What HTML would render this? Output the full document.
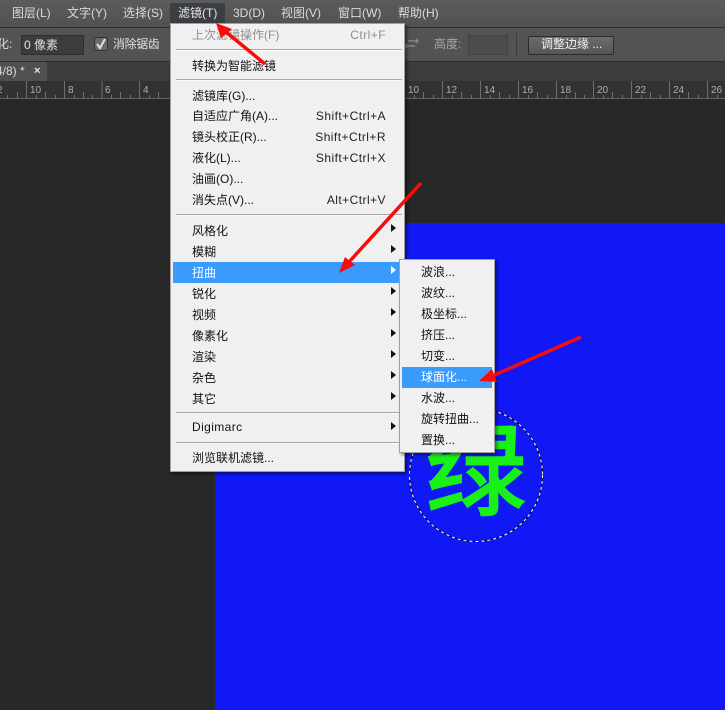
<!DOCTYPE html>
<html><head><meta charset="utf-8"><style>
html,body{margin:0;padding:0}
body{width:725px;height:710px;position:relative;overflow:hidden;background:#282828;font:12px/16px "Liberation Sans","Noto Sans CJK SC",sans-serif;color:#111}
div,span{position:absolute;white-space:nowrap}
.mb{top:5px;color:#dcdcdc;font-size:12px;line-height:16px}
.it{left:21px;height:16px;line-height:16px;color:#111}
.sc{right:18px;height:16px;line-height:16px;color:#222;letter-spacing:.45px}
.ar{left:220px;width:0;height:0;border-left:5px solid #111;border-top:4px solid transparent;border-bottom:4px solid transparent}
.sep{left:5px;width:226px;height:1px;background:#a8a8a8;border-bottom:1px solid #fafafa}
.s{left:21px;height:16px;line-height:16px;color:#111}
</style></head><body>
<div style="left:0;top:0;width:725px;height:27px;background:linear-gradient(#5c5c5c,#515151)"></div>
<div style="left:0;top:27px;width:725px;height:1px;background:#2c2c2c"></div>
<div style="left:0;top:28px;width:725px;height:33px;background:#535353"></div>
<div style="left:0;top:61px;width:725px;height:1px;background:#2e2e2e"></div>
<div style="left:0;top:62px;width:725px;height:19px;background:#3c3c3c"></div>
<div style="left:0;top:62px;width:47px;height:19px;background:#505050"></div>
<div style="left:0;top:81px;width:725px;height:17px;background:#323232"></div>
<div style="left:0;top:98px;width:725px;height:1px;background:#666"></div>
<div style="left:215px;top:223px;width:510px;height:487px;background:#1018f6"></div>

<span class="mb" style="left:12px">图层(L)</span>
<span class="mb" style="left:67px">文字(Y)</span>
<span class="mb" style="left:123px">选择(S)</span>
<div style="left:170px;top:3px;width:55px;height:20px;background:#3b3e42;border-radius:2px 2px 0 0"></div>
<span class="mb" style="left:178px;color:#e6e6e6">滤镜(T)</span>
<span class="mb" style="left:233px">3D(D)</span>
<span class="mb" style="left:281px">视图(V)</span>
<span class="mb" style="left:338px">窗口(W)</span>
<span class="mb" style="left:398px">帮助(H)</span>

<span style="left:-3px;top:36px;color:#dcdcdc">化:</span>
<div style="left:21px;top:35px;width:61px;height:18px;background:#3c3c3c;border:1px solid #2e2e2e"></div>
<span style="left:24px;top:37px;color:#e0e0e0">0 像素</span>
<div style="left:94px;top:37px;width:12px;height:12px;background:#6a6a6a;border:1px solid #333;border-radius:2px"></div>
<svg style="position:absolute;left:94px;top:37px" width="15" height="15"><path d="M3 7l3 4 5-9" fill="none" stroke="#e0e0e0" stroke-width="2"/></svg>
<span style="left:113px;top:36px;color:#e0e0e0;letter-spacing:-.4px">消除锯齿</span>
<svg style="position:absolute;left:404px;top:37px" width="15" height="15"><path d="M1 9h10M3 7l-2 2 2 2M4 4h10M12 2l2 2-2 2" fill="none" stroke="#888" stroke-width="1.5"/></svg>
<span style="left:434px;top:36px;color:#a8a8a8">高度:</span>
<div style="left:468px;top:35px;width:38px;height:18px;background:#4c4c4c;border:1px solid #434343"></div>
<div style="left:516px;top:33px;width:1px;height:23px;background:#3c3c3c"></div>
<div style="left:528px;top:36px;width:84px;height:17px;background:linear-gradient(#6c6c6c,#565656);border:1px solid #2c2c2c;border-radius:2px"></div>
<span style="left:541px;top:36px;color:#f0f0f0">调整边缘 ...</span>

<span style="left:-4px;top:63px;color:#dcdcdc">4/8) *</span>
<span style="left:34px;top:64px;color:#e8e8e8;font-weight:bold;font-size:11px;line-height:14px">×</span>

<svg style="position:absolute;left:0;top:81px" width="725" height="18" font-family="Liberation Sans" font-size="10" fill="#a8b0b8">
<path stroke="#6e6e6e" fill="none" d="M26.5 0v17M64.5 0v17M102 0v17M139.5 0v17M442.5 0v17M480.5 0v17M518.5 0v17M556.5 0v17M593.5 0v17M631.5 0v17M669.5 0v17M707.5 0v17M7.5 14v3M17.5 11v6M36.5 14v3M45.5 11v6M55.5 14v3M74.5 14v3M83.5 11v6M92.5 14v3M111.5 14v3M120.5 11v6M130.5 14v3M149.5 14v3M158.5 11v6M414.5 14v3M423.5 11v6M433.5 14v3M452.5 14v3M461.5 11v6M471.5 14v3M490.5 14v3M499.5 11v6M509.5 14v3M528.5 14v3M537.5 11v6M547.5 14v3M566.5 14v3M575.5 11v6M584.5 14v3M603.5 14v3M612.5 11v6M622.5 14v3M641.5 14v3M650.5 11v6M660.5 14v3M679.5 14v3M688.5 11v6M698.5 14v3M717.5 14v3"/>
<text x="-3" y="12">2</text><text x="30" y="12">10</text><text x="68" y="12">8</text><text x="105" y="12">6</text><text x="143" y="12">4</text>
<text x="408" y="12">10</text><text x="446" y="12">12</text><text x="484" y="12">14</text><text x="522" y="12">16</text><text x="560" y="12">18</text><text x="597" y="12">20</text><text x="635" y="12">22</text><text x="673" y="12">24</text><text x="711" y="12">26</text>
</svg>

<!-- canvas glyph and selection -->
<span style="left:426px;top:406px;font:400 100px/116px 'Noto Sans CJK SC',sans-serif;color:#18f018;-webkit-text-stroke:2.5px #18f018">绿</span>
<svg style="position:absolute;left:400px;top:400px" width="150" height="150"><circle cx="76" cy="75" r="66.5" fill="none" stroke="#000" stroke-width="1"/><circle cx="76" cy="75" r="66.5" fill="none" stroke="#fff" stroke-width="1" stroke-dasharray="3 3"/></svg>

<!-- main menu -->
<div style="left:170px;top:23px;width:233px;height:447px;background:#f0f0f0;border:1px solid #a0a0a0;box-shadow:2px 2px 3px rgba(0,0,0,.5)">
<span class="it" style="top:3px;color:#8f8f8f">上次滤镜操作(F)</span><span class="sc" style="top:3px;color:#8f8f8f">Ctrl+F</span>
<div class="sep" style="top:25px"></div>
<span class="it" style="top:34px">转换为智能滤镜</span>
<div class="sep" style="top:55px"></div>
<span class="it" style="top:64px">滤镜库(G)...</span>
<span class="it" style="top:84px">自适应广角(A)...</span><span class="sc" style="top:84px">Shift+Ctrl+A</span>
<span class="it" style="top:105px">镜头校正(R)...</span><span class="sc" style="top:105px">Shift+Ctrl+R</span>
<span class="it" style="top:126px">液化(L)...</span><span class="sc" style="top:126px">Shift+Ctrl+X</span>
<span class="it" style="top:147px">油画(O)...</span>
<span class="it" style="top:168px">消失点(V)...</span><span class="sc" style="top:168px">Alt+Ctrl+V</span>
<div class="sep" style="top:190px"></div>
<span class="it" style="top:199px">风格化</span><div class="ar" style="top:200px"></div>
<span class="it" style="top:220px">模糊</span><div class="ar" style="top:221px"></div>
<div style="left:2px;top:238px;width:229px;height:21px;background:#3a9bfc"></div>
<span class="it" style="top:241px;color:#fff">扭曲</span><div class="ar" style="top:242px;border-left-color:#fff"></div>
<span class="it" style="top:262px">锐化</span><div class="ar" style="top:263px"></div>
<span class="it" style="top:283px">视频</span><div class="ar" style="top:284px"></div>
<span class="it" style="top:304px">像素化</span><div class="ar" style="top:305px"></div>
<span class="it" style="top:325px">渲染</span><div class="ar" style="top:326px"></div>
<span class="it" style="top:346px">杂色</span><div class="ar" style="top:347px"></div>
<span class="it" style="top:367px">其它</span><div class="ar" style="top:368px"></div>
<div class="sep" style="top:388px"></div>
<span class="it" style="top:395px;letter-spacing:.4px">Digimarc</span><div class="ar" style="top:398px"></div>
<div class="sep" style="top:418px"></div>
<span class="it" style="top:426px">浏览联机滤镜...</span>
</div>

<!-- submenu -->
<div style="left:399px;top:259px;width:94px;height:192px;background:#f0f0f0;border:1px solid #a0a0a0;box-shadow:2px 2px 3px rgba(0,0,0,.45)">
<span class="s" style="top:4px">波浪...</span>
<span class="s" style="top:25px">波纹...</span>
<span class="s" style="top:46px">极坐标...</span>
<span class="s" style="top:67px">挤压...</span>
<span class="s" style="top:88px">切变...</span>
<div style="left:2px;top:107px;width:90px;height:21px;background:#3a9bfc"></div>
<span class="s" style="top:109px;color:#fff">球面化...</span>
<span class="s" style="top:130px">水波...</span>
<span class="s" style="top:151px">旋转扭曲...</span>
<span class="s" style="top:172px">置换...</span>
</div>

<!-- arrows -->
<svg style="position:absolute;left:0;top:0" width="725" height="710" fill="#fb0a0a" stroke="none">
<path d="M265 64L226 32" stroke="#fb0a0a" stroke-width="3.5" fill="none"/>
<path d="M216 23L232 29 221 38z"/>
<path d="M421 183L349 262" stroke="#fb0a0a" stroke-width="3.5" fill="none"/>
<path d="M339 273L345 257 355 265z"/>
<path d="M581 337L490 377" stroke="#fb0a0a" stroke-width="3.5" fill="none"/>
<path d="M479 381L492 369 497 382z"/>
</svg>
</body></html>
